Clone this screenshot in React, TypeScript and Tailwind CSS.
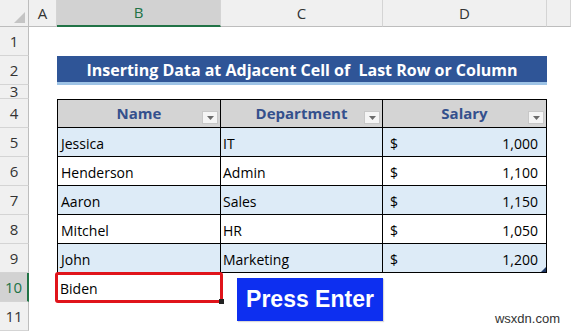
const ROWS = [
  { name: "Jessica", dept: "IT", salary: "1,000" },
  { name: "Henderson", dept: "Admin", salary: "1,100" },
  { name: "Aaron", dept: "Sales", salary: "1,150" },
  { name: "Mitchel", dept: "HR", salary: "1,050" },
  { name: "John", dept: "Marketing", salary: "1,200" },
];

function RowNum({ n, active = false }: { n: number; active?: boolean }) {
  return (
    <div
      className={`flex items-center justify-center border-b border-[#d4d4d4] text-[15px] ${
        active ? "bg-[#d2d2d2] border-r-2 border-r-[#217346] text-[#217346]" : "bg-[#f0f0f0] border-r border-r-[#bdbdbd] text-[#333]"
      } overflow-hidden`}
    >
      {n}
    </div>
  );
}

function ColHead({ label, active = false }: { label: string; active?: boolean }) {
  return (
    <div
      className={`flex items-center justify-center border-r border-[#d4d4d4] text-[15px] ${
        active ? "bg-[#d2d2d2] border-b-2 border-b-[#217346] text-[#217346]" : "bg-[#f0f0f0] border-b border-b-[#bdbdbd] text-[#333]"
      }`}
    >
      {label}
    </div>
  );
}

function Filter() {
  return (
    <span className="absolute right-[2px] top-[11px] flex h-[13px] w-[16px] items-center justify-center border border-[#c8c8c8] bg-[#f5f5f5]">
      <svg width="7" height="4" viewBox="0 0 7 4">
        <path d="M0 0h7L3.5 4z" fill="#6b6b6b" />
      </svg>
    </span>
  );
}

export default function App() {
  return (
    <div className="h-[332px] w-[571px] overflow-hidden bg-white font-['Open_Sans',sans-serif]">
      <div className="grid grid-cols-[29px_28px_164px_162px_164px_24px] grid-rows-[27px_29px_29px_14px_repeat(8,29px)]">
        {/* column headers */}
        <div className="relative border-b border-r border-[#bdbdbd] bg-[#f0f0f0]">
          <svg className="absolute bottom-[3px] right-[3px]" width="11" height="11" viewBox="0 0 11 11">
            <path d="M11 0v11H0z" fill="#c4c4c4" />
          </svg>
        </div>
        <ColHead label="A" />
        <ColHead label="B" active />
        <ColHead label="C" />
        <ColHead label="D" />
        <ColHead label="" />

        {/* row 1 */}
        <RowNum n={1} />
        <div className="col-span-5" />

        {/* row 2 title */}
        <RowNum n={2} />
        <div />
        <div className="col-span-3 flex items-center justify-center border-b-[3px] border-[#9dc3e6] bg-[#2f5597] pt-[1px] text-[16px] font-bold whitespace-pre text-white">
          Inserting Data at Adjacent Cell of  Last Row or Column
        </div>
        <div />

        {/* row 3 */}
        <RowNum n={3} />
        <div className="col-span-5" />

        {/* row 4 table header */}
        <RowNum n={4} />
        <div />
        {["Name", "Department", "Salary"].map((h, i) => (
          <div
            key={h}
            className={`relative flex items-center justify-center border-y border-r border-black bg-[#d4d4d4] text-[15px] font-bold text-[#34508d] ${
              i === 0 ? "border-l" : ""
            }`}
          >
            {h}
            <Filter />
          </div>
        ))}
        <div />

        {/* data rows */}
        {ROWS.map((r, i) => {
          const bg = i % 2 === 0 ? "bg-[#ddebf7]" : "bg-white";
          return [
            <RowNum key={`n${i}`} n={i + 5} />,
            <div key={`a${i}`} />,
            <div key={`b${i}`} className={`flex items-center border-b border-l border-r border-black pl-[3px] pt-[2px] text-[14px] text-black ${bg}`}>
              {r.name}
            </div>,
            <div key={`c${i}`} className={`flex items-center border-b border-r border-black pl-[2px] pt-[2px] text-[14px] text-black ${bg}`}>
              {r.dept}
            </div>,
            <div key={`d${i}`} className={`relative flex items-center justify-between border-b border-r border-black pl-[7px] pr-[8px] pt-[2px] text-[14px] text-black ${bg}`}>
              <span>$</span>
              <span>{r.salary}</span>
              {i === ROWS.length - 1 && (
                <svg className="absolute bottom-0 right-0" width="5" height="5" viewBox="0 0 5 5">
                  <path d="M5 0v5H0z" fill="#1f3864" />
                </svg>
              )}
            </div>,
            <div key={`e${i}`} />,
          ];
        })}

        {/* row 10 */}
        <RowNum n={10} active />
        <div />
        <div className="relative -mx-[2px] -mt-[1px] mb-[-1px] flex items-center rounded-[3px] border-[3px] border-[#e0141b] pl-[2px] pt-[1px] text-[14px] text-black">
          Biden
          <span className="absolute -bottom-[4px] -right-[4px] h-[5px] w-[5px] bg-[#222]" />
        </div>
        <div className="row-span-2 flex items-start pl-[16px] pt-[5px]">
          <div className="flex h-[43px] w-[160px] items-center justify-center bg-[#0d2ff0] font-['Liberation_Sans',Arial,sans-serif] text-[23px] font-bold text-white shadow-[1px_1px_1px_rgba(0,0,0,0.15)]">
            Press Enter
          </div>
        </div>
        <div />
        <div />

        {/* row 11 */}
        <RowNum n={11} />
        <div />
        <div />
        <div className="col-span-2 flex items-end justify-end pb-[3px] pr-[11px] font-['Liberation_Sans',Arial,sans-serif] text-[13px] text-[#333]">
          wsxdn.com
        </div>
      </div>
    </div>
  );
}
